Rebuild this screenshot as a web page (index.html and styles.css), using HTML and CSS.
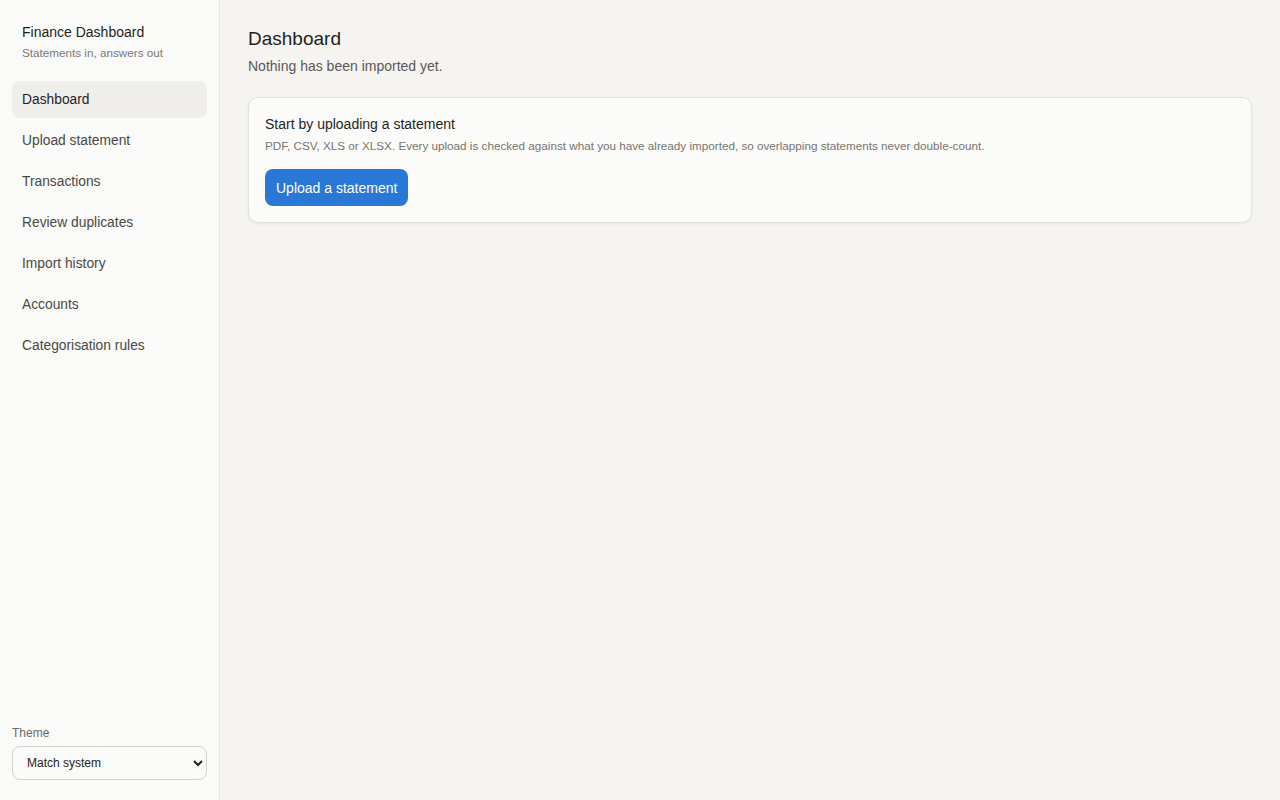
FILE: index.html
```html
<!DOCTYPE html>
<html lang="en">
<head>
    <meta charset="UTF-8">
    <meta name="viewport" content="width=device-width, initial-scale=1.0">
    <title>Finance Dashboard</title>
    <link rel="stylesheet" href="styles.css">
</head>
<body>
  <div class="layout">
    <aside class="sidebar">
        <div class="brand">
            <div class="brand-name">Finance Dashboard</div>
            <div class="brand-tag">Statements in, answers out</div>
        </div>
        <nav class="nav">
            <a href="#" class="nav-item active">Dashboard</a>
            <a href="#" class="nav-item">Upload statement</a>
            <a href="#" class="nav-item">Transactions</a>
            <a href="#" class="nav-item">Review duplicates</a>
            <a href="#" class="nav-item">Import history</a>
            <a href="#" class="nav-item">Accounts</a>
            <a href="#" class="nav-item">Categorisation rules</a>
        </nav>
        <div class="theme">
            <label for="theme-select">Theme</label>
            <select id="theme-select">
                <option>Match system</option>
                <option>Light</option>
                <option>Dark</option>
            </select>
        </div>
    </aside>

    <main class="main">
        <h1>Dashboard</h1>
        <p class="lead">Nothing has been imported yet.</p>

        <section class="card">
            <h2>Start by uploading a statement</h2>
            <p class="hint">PDF, CSV, XLS or XLSX. Every upload is checked against what you have already imported, so overlapping statements never double-count.</p>
            <button type="button" class="btn-primary">Upload a statement</button>
        </section>
    </main>
  </div>
</body>
</html>
```

FILE: styles.css
```css
body {
    font-family: "Liberation Sans", Arial, sans-serif;
    background-color: #f5f4f1;
    color: #1f1f1d;
    margin: 0;
    padding: 0;
}
.layout {
    display: flex;
    min-height: 100vh;
}
.sidebar {
    width: 220px;
    flex-shrink: 0;
    background-color: #fafaf8;
    border-right: 1px solid #e6e5e1;
    padding: 23px 12px 20px;
    box-sizing: border-box;
    display: flex;
    flex-direction: column;
    height: 100vh;
}
.brand {
    padding: 0 10px;
    margin-bottom: 21px;
}
.brand-name {
    font-size: 14px;
    line-height: 18px;
    color: #1f1f1d;
}
.brand-tag {
    font-size: 11.7px;
    line-height: 14px;
    color: #7a7975;
    margin-top: 5px;
}
.nav {
    display: flex;
    flex-direction: column;
    gap: 4px;
}
.nav-item {
    display: block;
    padding: 0 10px;
    height: 37px;
    line-height: 38px;
    font-size: 13.8px;
    color: #4a4946;
    text-decoration: none;
    border-radius: 8px;
}
.nav-item.active {
    background-color: #efeeeb;
    color: #1f1f1d;
}
.theme {
    margin-top: auto;
}
.theme label {
    display: block;
    font-size: 12px;
    color: #6d6c68;
    margin-bottom: 6px;
}
.theme select {
    width: 100%;
    height: 34px;
    padding: 0 8px 0 10px;
    font-family: inherit;
    font-size: 12px;
    color: #1f1f1d;
    background-color: #fafaf8;
    border: 1px solid #d3d1cc;
    border-radius: 8px;
}
.main {
    flex: 1;
    padding: 27px 28px;
}
h1 {
    font-size: 19px;
    font-weight: normal;
    line-height: 24px;
    margin: 0 0 7px;
}
.lead {
    font-size: 14px;
    color: #5a5955;
    margin: 0 0 23px;
}
.card {
    background-color: #fbfbf9;
    border: 1px solid #e3e2de;
    border-radius: 10px;
    box-shadow: 0 1px 3px rgba(0,0,0,0.06);
    padding: 17px 16px 16px;
}
.card h2 {
    font-size: 14px;
    font-weight: normal;
    line-height: 18px;
    margin: 0 0 6px;
}
.hint {
    font-size: 11.7px;
    color: #76756f;
    margin: 0 0 17px;
}
.btn-primary {
    background-color: #2a78d6;
    color: #fff;
    font-family: inherit;
    font-size: 14px;
    height: 37px;
    padding: 0 11px;
    border: none;
    border-radius: 8px;
    cursor: pointer;
}
```
